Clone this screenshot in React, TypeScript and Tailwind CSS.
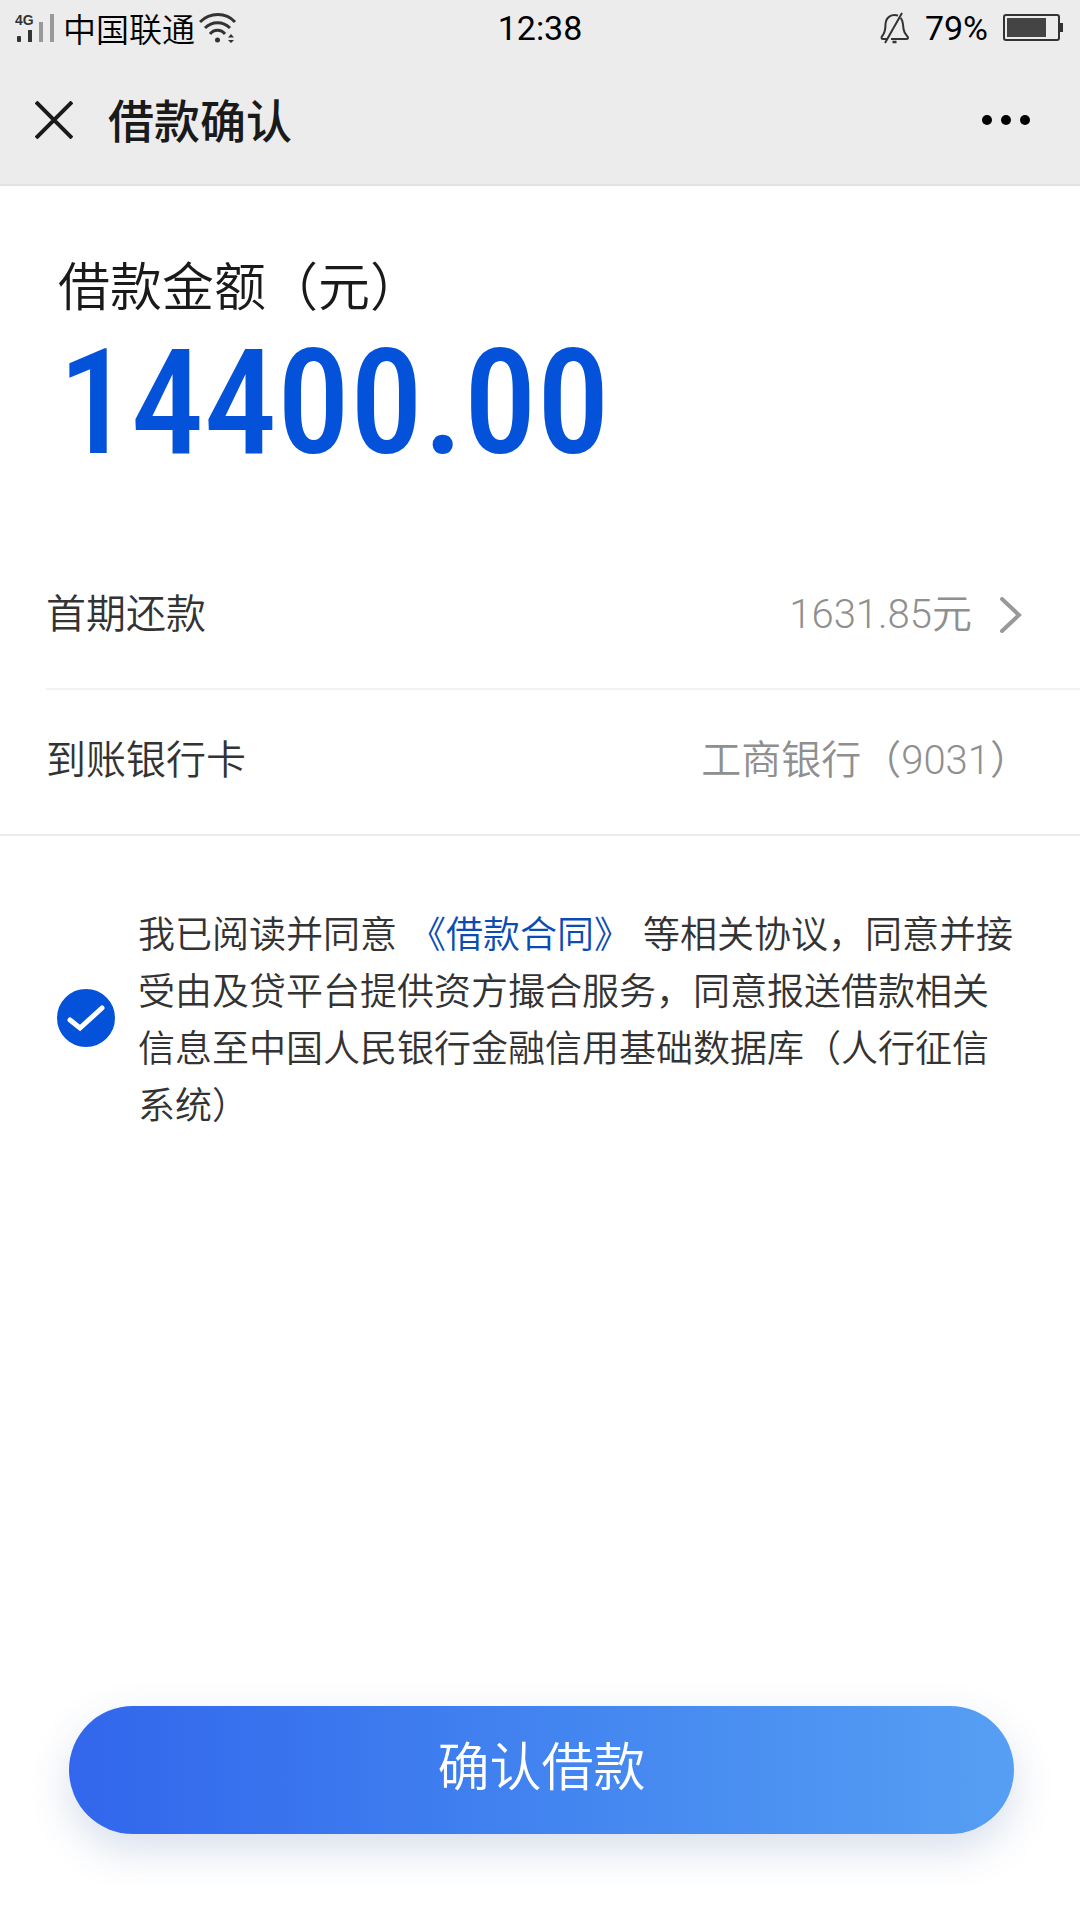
import React, { useState } from 'react';

const SignalIcon = () => (
  <svg width="42" height="32" viewBox="0 0 42 32" role="img" aria-label="4G">
    <text x="0" y="13" fontSize="14" fontWeight="700" fill="#333" fontFamily="Liberation Sans, sans-serif">4G</text>
    <rect x="2" y="24" width="4" height="6" rx="1" fill="#333" />
    <rect x="13" y="18" width="4" height="12" fill="#333" />
    <rect x="24" y="10" width="4" height="20" fill="#999" />
    <rect x="35" y="2" width="4" height="28" fill="#999" />
  </svg>
);

const WifiIcon = () => (
  <svg width="38" height="30" viewBox="0 0 38 30" fill="none" stroke="#333" strokeWidth="3">
    <path d="M1 9C11-1 27-1 36 9" />
    <path d="M6 15C13 8 24 8 31 15" />
    <path d="M11 21C15 16 22 16 26 21" />
    <circle cx="18.500" cy="27" r="2.500" fill="#333" stroke="none" />
    <path d="M29 24.500l3-3.500 3 3.500zM29 27l3 3 3-3z" fill="#333" stroke="none" />
  </svg>
);

const MutedBellIcon = () => (
  <svg width="30" height="32" viewBox="0 0 30 32" fill="none" stroke="#333" strokeWidth="2">
    <path d="M18 3.500C11 2 6 5 5.500 12C5.500 18 5 20 3 23C1 25 1 27 3 27H8" />
    <path d="M20.500 6C23 8 23 12 23.500 17C24 20 25 22 27 24C29 26 28 27 26 27H11" />
    <path d="M22 1L5 31" />
    <path d="M12.500 30h4" strokeWidth="2.500" />
  </svg>
);

const BatteryIcon = () => (
  <svg width="62" height="28" viewBox="0 0 62 28">
    <rect x="1" y="1" width="55" height="25" rx="2" fill="none" stroke="#333" strokeWidth="2" />
    <rect x="4" y="4" width="39" height="19" fill="#444" />
    <rect x="57" y="9" width="3" height="9" fill="#333" />
  </svg>
);

const StatusBar = () => (
  <div className="flex h-14 items-center px-[15px] text-black">
    <div className="flex flex-1 items-center">
      <SignalIcon />
      <span className="ml-1.5 text-[33px] font-[350] leading-none">中国联通</span>
      <span className="ml-1"><WifiIcon /></span>
    </div>
    <span className="font-[Roboto,sans-serif] text-[34px] leading-none">12:38</span>
    <div className="flex flex-1 items-center justify-end">
      <MutedBellIcon />
      <span className="mx-[15px] font-[Roboto,sans-serif] text-[34px] leading-none">79%</span>
      <BatteryIcon />
    </div>
  </div>
);

const NavBar = () => (
  <header className="flex h-[130px] items-center border-b-2 border-[#e2e2e2] pl-[35px] pr-[50px] text-[#1a1a1a]">
    <button type="button" aria-label="关闭">
      <svg width="38" height="38" viewBox="0 0 38 38" stroke="#1a1a1a" strokeWidth="4">
        <path d="M1 1L37 37M37 1L1 37" />
      </svg>
    </button>
    <h1 className="ml-[35px] pb-1 text-[46px] font-medium leading-none">借款确认</h1>
    <button type="button" aria-label="更多" className="ml-auto flex gap-[9px]">
      <span className="size-[10px] rounded-full bg-black"></span>
      <span className="size-[10px] rounded-full bg-black"></span>
      <span className="size-[10px] rounded-full bg-black"></span>
    </button>
  </header>
);

const DetailRow = ({ label, children }: { label: string; children: React.ReactNode }) => (
  <div className="flex h-36 items-center justify-between pb-0.5 font-[Roboto,'Noto_Sans_CJK_SC',sans-serif] text-[40px] font-[350] leading-none">
    <span className="text-[#333]">{label}</span>
    {children}
  </div>
);

export default function App() {
  const [agreed, setAgreed] = useState(true);

  return (
    <div className="flex min-h-screen flex-col bg-white font-['Noto_Sans_CJK_SC',sans-serif]">
      <div className="bg-[#ececec]">
        <StatusBar />
        <NavBar />
      </div>

      <main className="flex flex-1 flex-col">
        <section className="pl-[58px] pr-14 pt-[66px]">
          <h2 className="text-[52px] font-[350] leading-[64px] text-[#1a1a1a]">借款金额（元）</h2>
          <p className="mt-4 font-['Roboto_Condensed',Roboto,sans-serif] text-[146px] font-medium leading-[144px] text-[#0452d9]">
            14400.00
          </p>
        </section>

        <section className="mt-[68px] border-b-2 border-[#ebebeb] pl-[46px]">
          <div className="border-b-2 border-[#f2f2f2] pr-[58px]">
            <DetailRow label="首期还款">
              <button type="button" className="flex items-center gap-7 text-[#8f8f8f]">
                1631.85元
                <svg width="22" height="36" viewBox="0 0 22 36" fill="none" stroke="#999" strokeWidth="4" strokeLinecap="round">
                  <path d="M2 2L19 18L2 34" />
                </svg>
              </button>
            </DetailRow>
          </div>
          <div className="pr-[50px]">
            <DetailRow label="到账银行卡">
              <span className="text-[#8f8f8f]">工商银行（9031）</span>
            </DetailRow>
          </div>
        </section>

        <section className="mt-[68px] flex items-center gap-[23px] pl-[57px] pr-14">
          <span className="relative size-[58px] shrink-0">
            <input
              id="agree"
              type="checkbox"
              checked={agreed}
              onChange={(e) => setAgreed(e.target.checked)}
              className="block size-full appearance-none rounded-full border-2 border-[#0452d9] bg-white checked:bg-[#0452d9]"
            />
            <svg className="pointer-events-none absolute inset-0" viewBox="0 0 58 58" fill="none" stroke="#fff" strokeWidth="5" strokeLinecap="round">
              <path d="M13 31L23 39L45 19" />
            </svg>
          </span>
          <label htmlFor="agree" className="text-[37px] font-[350] leading-[57px] text-[#333]">
            我已阅读并同意<a href="#contract" className="mx-3 text-[#0a4cb4]">《借款合同》</a>等相关协议，同意并接受由及贷平台提供资方撮合服务，同意报送借款相关信息至中国人民银行金融信用基础数据库（人行征信系统）
          </label>
        </section>

        <div className="mt-auto pb-[86px] pl-[69px] pr-[66px]">
          <button
            type="button"
            className="h-32 w-full rounded-full bg-linear-to-r from-[#3266ec] to-[#569ff3] pb-3 text-[52px] font-[350] leading-none text-white shadow-[0_16px_40px_rgba(40,80,150,0.18)]"
          >
            确认借款
          </button>
        </div>
      </main>
    </div>
  );
}
